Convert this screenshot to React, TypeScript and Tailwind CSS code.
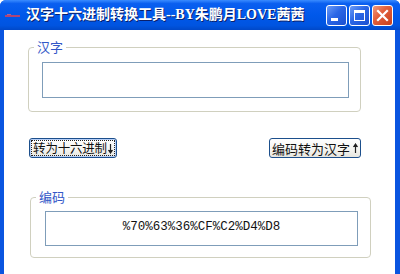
import React from "react";

const cjk = '"Noto Sans CJK SC", "Liberation Sans", sans-serif';

function TitleButton({ kind }: { kind: "min" | "max" | "close" }) {
  const isClose = kind === "close";
  return (
    <div
      className={`w-[21px] h-[21px] rounded-[3px] border border-white flex items-center justify-center ${
        isClose
          ? "bg-[linear-gradient(135deg,#f09b7f_0%,#e2603d_40%,#c8401c_100%)]"
          : "bg-[linear-gradient(135deg,#6c9cf7_0%,#2a66e6_45%,#1a4fd0_100%)]"
      }`}
    >
      {kind === "min" && <div className="w-[7px] h-[3px] bg-white mt-[8px] ml-[-4px]" />}
      {kind === "max" && (
        <div className="w-[11px] h-[11px] border border-white border-t-[3px]" />
      )}
      {kind === "close" && (
        <svg width="13" height="13" viewBox="0 0 13 13">
          <path d="M2 2 L11 11 M11 2 L2 11" stroke="white" strokeWidth="2.2" strokeLinecap="square" />
        </svg>
      )}
    </div>
  );
}

function Arrow({ up }: { up?: boolean }) {
  return (
    <svg width="5" height="11" viewBox="0 0 5 11" className="shrink-0">
      {up ? (
        <path d="M2.5 1 L2.5 10 M0.5 4 L2.5 1 L4.5 4" stroke="#222" strokeWidth="1.2" fill="#222" />
      ) : (
        <path d="M2.5 1 L2.5 10 M0.5 7 L2.5 10 L4.5 7" stroke="#222" strokeWidth="1.2" fill="#222" />
      )}
    </svg>
  );
}

export default function App() {
  return (
    <div className="w-[400px] h-[274px] overflow-hidden flex flex-col bg-[#0a55e0] rounded-t-[6px]">
      {/* Title bar */}
      <div className="h-[30px] flex items-center bg-[linear-gradient(180deg,#3a8cff_0%,#0a5ff0_12%,#0058ea_50%,#0054e0_85%,#0048c8_100%)]">
        <svg width="18" height="8" viewBox="0 0 18 8" className="ml-[5px] mt-[1px]">
          <rect x="0" y="3" width="15" height="2" fill="#d8405a" opacity="0.8" />
          <rect x="2" y="2" width="4" height="1" fill="#ee6677" opacity="0.7" />
        </svg>
        <div
          className="ml-[3px] text-white font-bold text-[14px] leading-none whitespace-nowrap [text-shadow:1px_1px_0_#0a1f6a]"
          style={{ fontFamily: '"Liberation Serif", "Noto Sans CJK SC", serif' }}
        >
          汉字十六进制转换工具--BY朱鹏月LOVE茜茜
        </div>
        <div className="ml-auto mr-[7px] flex gap-[2px]">
          <TitleButton kind="min" />
          <TitleButton kind="max" />
          <TitleButton kind="close" />
        </div>
      </div>

      {/* Body */}
      <div className="flex-1 ml-[4px] mr-[5px] bg-white flex flex-col" style={{ fontFamily: cjk }}>
        {/* Group 1 */}
        <fieldset className="ml-[24px] mt-[10px] w-[333px] h-[72px] border border-[#d0d0bf] rounded-[4px] p-0">
          <legend className="ml-[5px] px-[3px] text-[13px] leading-[14px] text-[#3358c8]">汉字</legend>
          <div className="ml-[13px] mt-[8px] w-[307px] h-[36px] border border-[#7f9db9] bg-white" />
        </fieldset>

        {/* Buttons */}
        <div className="flex mt-[26px] h-[20px]">
          <button className="ml-[25px] w-[88px] h-[20px] rounded-[3px] border border-[#1c4f8c] bg-[linear-gradient(180deg,#ffffff_0%,#f4f4f0_60%,#e6e5de_100%)] p-[1px] shadow-[inset_0_0_0_1px_#b6cff8]">
            <div className="w-full h-full border border-dotted border-[#222] flex items-center justify-center gap-[1px] text-[12.5px] tracking-[-0.2px] leading-none text-[#111] whitespace-nowrap">
              <span>转为十六进制</span>
              <Arrow />
            </div>
          </button>
          <button className="ml-[152px] w-[92px] h-[20px] rounded-[3px] border border-[#1c4f8c] bg-[linear-gradient(180deg,#ffffff_0%,#f4f4f0_60%,#e6e5de_100%)] flex items-center justify-center text-[13px] leading-none text-[#111] whitespace-nowrap">
            <span>编码转为汉字</span>
            <span className="w-[3px]" />
            <Arrow up />
          </button>
        </div>

        {/* Group 2 */}
        <fieldset className="ml-[26px] mt-[32px] w-[341px] h-[68px] border border-[#d0d0bf] rounded-[4px] p-0">
          <legend className="ml-[5px] px-[3px] text-[13px] leading-[14px] text-[#3358c8]">编码</legend>
          <div className="ml-[14px] mt-[7px] w-[313px] h-[35px] border border-[#7f9db9] bg-white flex items-center justify-center">
            <span
              className="text-[12.5px] text-[#111] leading-none mt-[-2px]"
              style={{ fontFamily: '"Liberation Mono", monospace' }}
            >
              %70%63%36%CF%C2%D4%D8
            </span>
          </div>
        </fieldset>
      </div>
    </div>
  );
}
